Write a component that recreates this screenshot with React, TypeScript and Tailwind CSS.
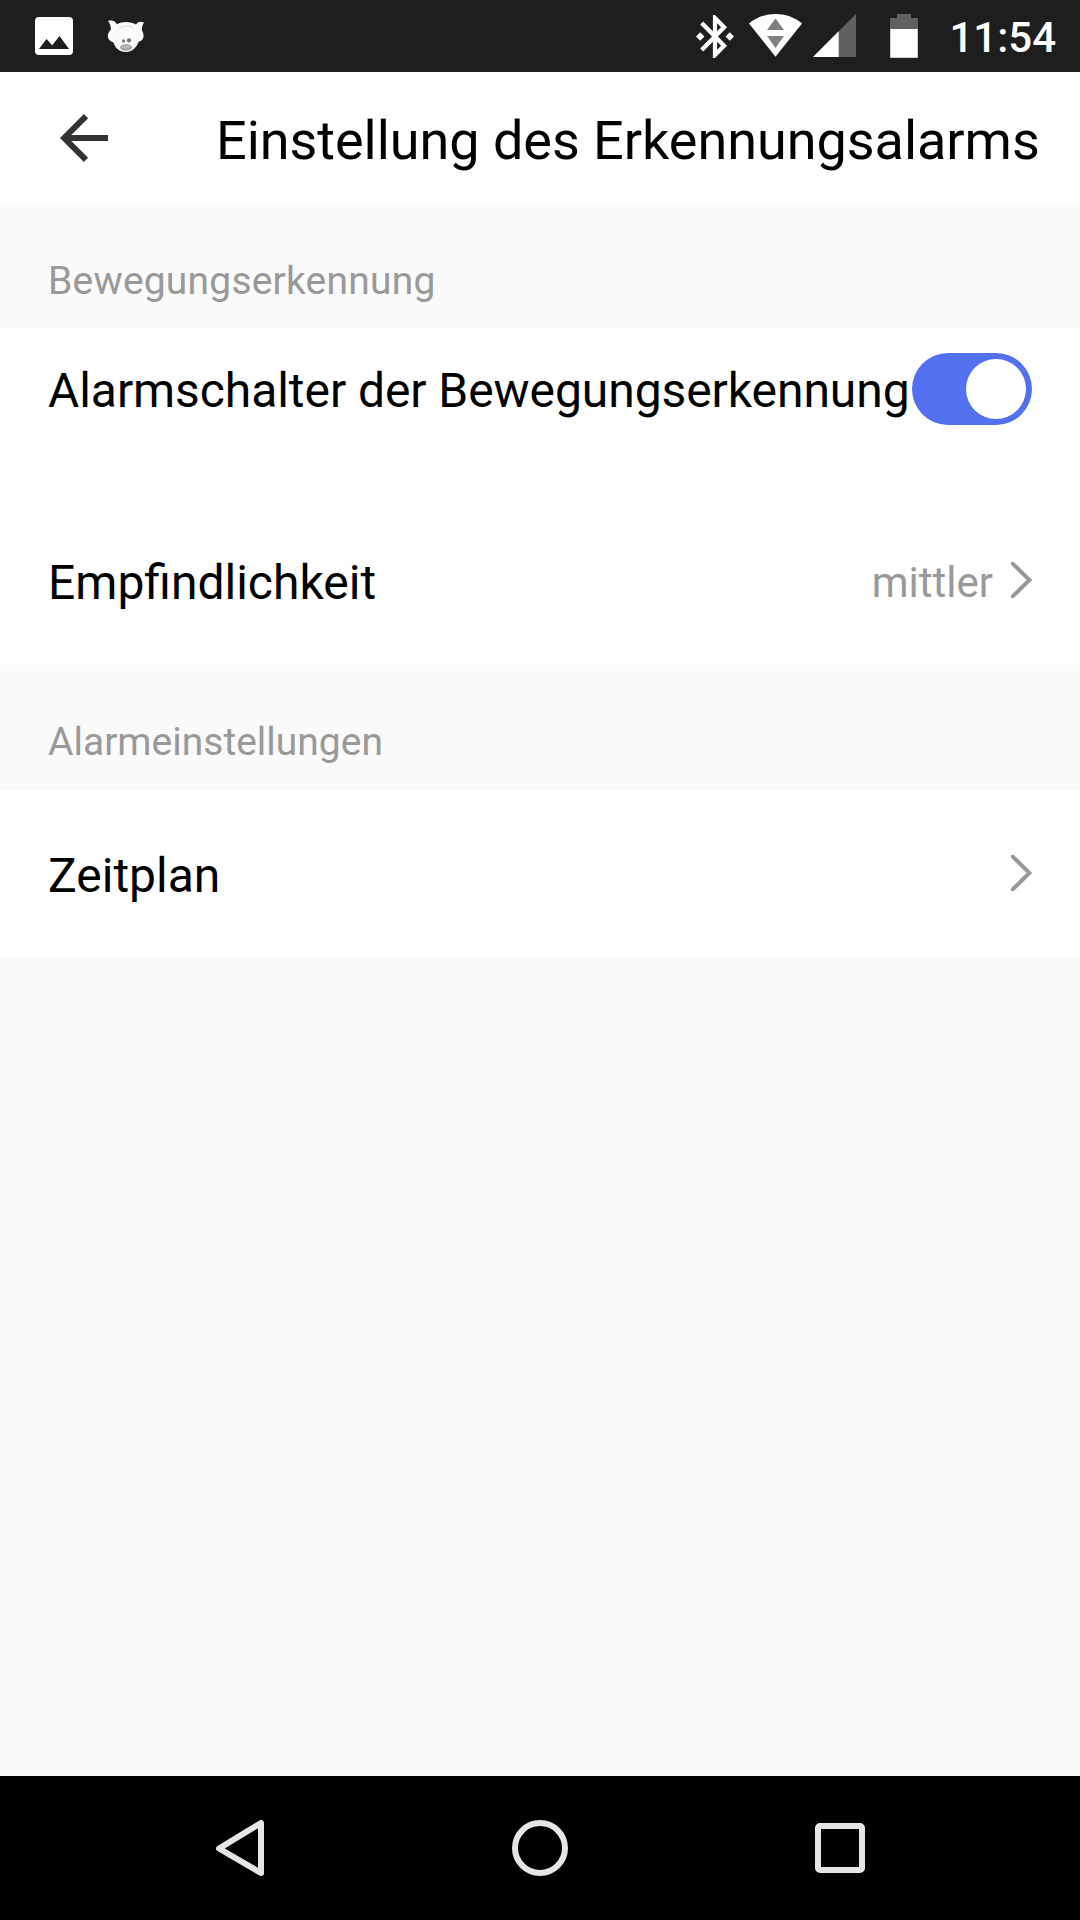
import React from "react";

function PictureIcon() {
  return (
    <svg width="38" height="38" viewBox="0 0 38 38">
      <rect width="38" height="38" rx="4" fill="#fff" />
      <path d="M4 32 11.5 22 17.2 28.3 24.5 19 34 32Z" fill="#1e1e1e" />
    </svg>
  );
}

function PigIcon() {
  return (
    <svg width="38" height="34" viewBox="0 0 38 34">
      <path
        d="M1 .8C3.500 0 7 .5 8.500 2.200 9.300 3.200 9.500 4 10 4.300 12.500 2.600 15.500 1.900 19 1.900s7.500.9 10 2.600C29.700 4 30 3 31.200 2.300 32.800 1.500 35 1.600 37 2.600 35.500 5 34.800 7.500 34.800 10 36 12 36.800 14 36.500 17c-.5 2.500-2 4.200-4.800 4.700C29.500 27.500 25 32 19 32 12.500 32 8 28 6.500 22.500 3 21.500.900 19 .800 16 .800 13 2.500 11 4 9.500 4 6 2.500 3 1 .8Z"
        fill="#fafafa"
      />
      <path d="M12 9c2-2 4-2.500 6.500-2.800M20 5.800c2.500 0 5 1.200 6.500 3" stroke="#d4d4d4" strokeWidth="1" fill="none" />
      <circle cx="16.500" cy="21" r="1.700" fill="#808080" />
      <circle cx="22" cy="20.400" r="2.100" fill="#757575" />
      <ellipse cx="19" cy="27.500" rx="5.900" ry="3.300" fill="#a0a0a0" />
      <ellipse cx="19" cy="27" rx="4" ry="1.600" fill="#bcbcbc" />
    </svg>
  );
}

function BluetoothIcon() {
  return (
    <svg width="38" height="43" viewBox="3 2 18 20" preserveAspectRatio="none" fill="#fff">
      <path d="M7 12l-2-2-2 2 2 2 2-2zm10.710-4.290L12 2h-1v7.590L6.410 5 5 6.410 10.590 12 5 17.590 6.410 19 11 14.410V22h1l5.710-5.710-4.300-4.290 4.300-4.290zM13 5.830l1.880 1.880L13 9.590V5.830zm1.880 10.460L13 18.170v-3.760l1.880 1.880zM19 10l-2 2 2 2 2-2-2-2z" />
    </svg>
  );
}

function WifiIcon() {
  return (
    <svg width="54" height="44" viewBox="0 0 54 44">
      <path d="M0 9.600C7.500 3 17 0 26.500 0S45.500 3 53 9.600L26.500 42.700Z" fill="#fff" />
      <path d="M26.500 4.500 35 16H18ZM18 22H35L26.500 34Z" fill="#808080" />
    </svg>
  );
}

function SignalIcon() {
  return (
    <svg width="43" height="43" viewBox="0 0 43 43">
      <path d="M0 43 43 0V43Z" fill="#606060" />
      <path d="M0 43 25.700 17.300V43Z" fill="#fff" />
    </svg>
  );
}

function BatteryIcon() {
  return (
    <svg width="28" height="44" viewBox="0 0 28 44">
      <path d="M7 0H21V4H28V44H0V4H7Z" fill="#606060" />
      <rect x="0.300" y="15" width="27.400" height="28.700" fill="#fff" />
    </svg>
  );
}

function BackArrow() {
  return (
    <svg width="48" height="48" viewBox="0 0 48 48">
      <path d="M48 24H5M26 2.200 4.200 24 26 45.800" stroke="#333" strokeWidth="6" fill="none" />
    </svg>
  );
}

function Chevron() {
  return (
    <svg width="21" height="36" viewBox="0 0 21 36">
      <path d="M-1 -1 18.500 18-1 37" stroke="#999" strokeWidth="4" fill="none" />
    </svg>
  );
}

function StatusBar() {
  return (
    <div className="flex h-[72px] items-start bg-[#1e1e1e]">
      <div className="ml-[35px] mt-[17px]"><PictureIcon /></div>
      <div className="ml-[34px] mt-5"><PigIcon /></div>
      <div className="ml-auto mt-[15px]"><BluetoothIcon /></div>
      <div className="ml-[15px] mt-3.5"><WifiIcon /></div>
      <div className="ml-2.5 mt-3.5"><SignalIcon /></div>
      <div className="ml-[34px] mt-3.5"><BatteryIcon /></div>
      <div className="ml-[31px] mr-6 mt-3 w-[107px] text-right text-[42px] font-medium leading-[52px] text-white">11:54</div>
    </div>
  );
}

function SectionHeader({ title, className = "" }: { title: string; className?: string }) {
  return (
    <h2 className={`h-[125px] bg-[#fafafa] px-12 pt-[54px] text-[39px] font-normal leading-[46px] text-[#999] ${className}`}>
      {title}
    </h2>
  );
}

function LinkRow({ label, value }: { label: string; value?: string }) {
  return (
    <div className="flex h-[168px] items-center px-12">
      <span className="mt-1 text-[48px] leading-[56px]">{label}</span>
      <span className="ml-auto mr-[18px] mt-1 text-[42px] leading-[56px] text-[#999]">{value}</span>
      <div className="-mt-0.5"><Chevron /></div>
    </div>
  );
}

function ToggleRow({ label }: { label: string }) {
  return (
    <div className="flex h-[168px] items-start justify-between px-12 pt-6">
      <span className="mt-2.5 whitespace-nowrap text-[48px] leading-[56px] tracking-[-0.07px]">{label}</span>
      <button role="switch" aria-checked="true" aria-label={label} className="flex h-[72px] w-[120px] shrink-0 items-center justify-end rounded-full bg-[#5370ee] p-1.5">
        <span className="size-[60px] rounded-full bg-white" />
      </button>
    </div>
  );
}

function NavBar() {
  return (
    <div className="grid h-36 grid-cols-3 place-items-center bg-black px-[90px]">
      <svg width="56" height="56" viewBox="0 0 56 56">
        <path d="M49 3V53L7 28.500Z" stroke="#e6e6e6" strokeWidth="6" strokeLinejoin="round" fill="none" />
      </svg>
      <svg width="56" height="56" viewBox="0 0 56 56">
        <circle cx="28" cy="28" r="25" stroke="#e6e6e6" strokeWidth="6" fill="none" />
      </svg>
      <div className="size-[50px] rounded-[5px] border-6 border-[#e6e6e6]" />
    </div>
  );
}

export default function App() {
  return (
    <div className="flex h-[1920px] w-[1080px] flex-col overflow-hidden bg-[#fafafa] font-[Roboto,sans-serif] text-black">
      <StatusBar />
      <header className="flex h-[132px] items-center bg-white pl-[60px]">
        <BackArrow />
        <h1 className="ml-[108px] mt-1.5 whitespace-nowrap text-[54px] font-normal leading-[64px] tracking-[-0.04px]">Einstellung des Erkennungsalarms</h1>
      </header>
      <main className="flex-1">
        <SectionHeader title="Bewegungserkennung" className="tracking-[0.2px]" />
        <div className="bg-white">
          <ToggleRow label="Alarmschalter der Bewegungserkennung" />
          <LinkRow label="Empfindlichkeit" value="mittler" />
        </div>
        <SectionHeader title="Alarmeinstellungen" />
        <div className="bg-white">
          <LinkRow label="Zeitplan" />
        </div>
      </main>
      <NavBar />
    </div>
  );
}
